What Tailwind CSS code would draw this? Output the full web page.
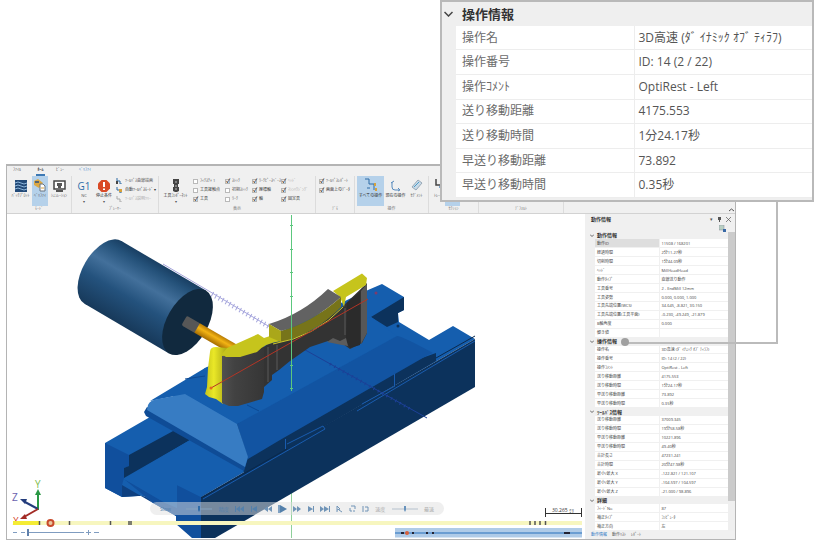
<!DOCTYPE html>
<html lang="ja">
<head>
    <meta charset="UTF-8">
    <meta name="viewport" content="width=device-width, initial-scale=1.0">
    <title>操作情報</title>
    <script src="https://cdn.jsdelivr.net/npm/@tailwindcss/browser@4"></script>
</head>
<body class="bg-white font-['Open_Sans','Noto_Sans_CJK_JP',sans-serif] text-[#555]">
    <div class="relative flex min-h-screen flex-col pt-[164px] pr-[78px] pb-2 pl-[6px]">

        <!-- Simulator window -->
        <main class="flex flex-1 flex-col border border-t-2 border-[#b4b4b4] bg-[#f0f0f0] text-[4px] leading-[6px]">

            <!-- Ribbon -->
            <header class="border-b border-[#d2d2d2]">
                <nav class="flex h-[10px] items-start gap-[11px] pl-[6px] text-[4px] leading-[8px]">
                    <a href="#" class="w-3">ﾌｧｲﾙ</a>
                    <a href="#" class="w-[9px] border-b-2 border-[#3c78b4] text-center font-bold text-[#333]">ﾎｰﾑ</a>
                    <a href="#" class="w-3">ﾋﾞｭｰ</a>
                    <a href="#" class="w-5 text-[#2f78c4]">ﾍﾞﾘﾌｧｲ</a>
                </nav>
                <div class="flex h-[37px] overflow-hidden whitespace-nowrap [&>section]:flex [&>section]:shrink-0 [&>section]:flex-col [&>section]:border-r [&>section]:border-[#dcdcdc] [&_button]:flex [&_button]:flex-col [&_button]:items-center [&_button]:overflow-hidden [&_h2]:text-center [&_h2]:text-[#777] [&_input]:size-[5px] [&_input]:shrink-0 [&_input]:appearance-none [&_input]:border [&_input]:border-[#b9b9b9] [&_input]:bg-white [&_input]:text-[6px] [&_input]:leading-[3px] [&_input]:font-bold [&_input]:text-[#444] [&_label]:flex [&_label]:items-center [&_label]:gap-[2px]">
                    <section class="w-[65px]">
                        <div class="flex h-[30px] pl-[2px]">
                            <button class="w-[23px] pt-1">
                                <svg class="h-3 w-3" viewBox="0 0 12 12"><path fill="#234a78" d="M0 0h12v12H0z"/><path fill="none" stroke="#8db6dc" d="M0 3q3-2 6 0t6 0M0 6q3-2 6 0t6 0M0 9q3-2 6 0t6 0"/></svg>
                                <span class="pt-[1px]">ﾊﾞｯｸﾌﾟﾛｯﾄ</span>
                            </button>
                            <button class="w-4 bg-[#b5d1ea] pt-[3px]">
                                <svg class="h-[13px] w-3" viewBox="0 0 12 13"><path fill="#dca843" d="M0 2l4-2 5 4-4 5-5-3z"/><path fill="#59656f" d="M1 2h4v2H1z"/><path fill="#fff" stroke="#697580" d="M6 5h3l2 2v5H6z"/><path stroke="#d9a23f" d="M7 9h3"/></svg>
                                <span class="pt-[1px]">ﾍﾞﾘﾌｧｲ</span>
                            </button>
                            <button class="w-[22px] pt-1">
                                <svg class="h-3 w-[13px]" viewBox="0 0 13 12"><path fill="#fff" stroke="#444" stroke-width="1.5" d="M1 1h11v8H1z"/><path fill="#555" d="M4 3h5v3H8v2H5V6H4zM3 10h7v2H3z"/></svg>
                                <span class="pt-[1px]">ｼﾐｭﾚｰｼｮﾝ</span>
                            </button>
                        </div>
                        <h2>ﾓｰﾄﾞ</h2>
                    </section>

                    <section class="w-[87px]">
                        <div class="flex h-[30px] pl-[2px]">
                            <button class="w-5 pt-1">
                                <span class="text-[10px] leading-3 text-[#2e6da8]">G1</span>
                                <span class="pt-[1px]">NC</span>
                                <span>▾</span>
                            </button>
                            <button class="w-5 pt-1">
                                <svg class="h-3 w-3" viewBox="0 0 12 12"><path fill="#d94a26" d="M3.5 0h5L12 3.500v5L8.500 12h-5L0 8.500v-5z"/><path stroke="#fff" stroke-width="2" d="M6 2v5M6 8.500v1.500"/></svg>
                                <span class="pt-[1px] text-[#333]">停止条件</span>
                                <span>▾</span>
                            </button>
                            <div class="flex flex-col gap-[3px] pt-[2px] pl-[2px]">
                                <a href="#" class="flex gap-[3px]"><svg class="size-[6px]" viewBox="0 0 6 6"><path fill="none" stroke="#2d6aa5" d="M1 0v3h3v3h2"/><path fill="#444" d="M0 3h2v3H0z"/></svg>ﾂｰﾙﾊﾟｽ曲線描画</a>
                                <a href="#" class="flex gap-[3px] text-[#333]"><svg class="size-[6px]" viewBox="0 0 6 6"><path fill="none" stroke="#2d6aa5" d="M1 0v3h3v3h2"/><path fill="#d8a13a" d="M3 2h3v3H3z"/></svg>自動ﾂｰﾙﾊﾟｽﾓｰﾄﾞ ▾</a>
                                <a href="#" class="flex gap-[3px] text-[#aaa]"><svg class="size-[6px]" viewBox="0 0 6 6"><path fill="none" stroke="#aaa" d="M1 0v3h3v3h2"/></svg>ﾂｰﾙﾊﾟｽ説明ﾂﾘｰ</a>
                            </div>
                        </div>
                        <h2>ﾌﾟﾚｰﾔｰ</h2>
                    </section>

                    <section class="w-[157px]">
                        <div class="flex h-[30px] pl-[2px]">
                            <button class="w-[29px] pt-[3px]">
                                <svg class="h-[13px] w-[6px]" viewBox="0 0 6 13"><path fill="#444" d="M0 0h6v5H5v3h1v4l-2 1H2l-2-1V8h1V5H0z"/><path stroke="#bbb" d="M2 3h2M2 7h2M2 10h2"/></svg>
                                <span class="pt-[1px] text-[#333]">工具ｺﾝﾎﾟｰﾈﾝﾄ</span>
                                <span>▾</span>
                            </button>
                            <div class="grid grid-cols-[32px_27px_29px_30px] content-start gap-y-[3px] pt-[2px] pl-[3px]">
                                <label><input type="checkbox">ﾌｨｸｽﾁｬ 1</label>
                                <label><input type="checkbox" checked class="checked:before:content-['✓']">ｽﾄｯｸ</label>
                                <label><input type="checkbox" checked class="checked:before:content-['✓']">ﾜｰｸﾋﾟｰｽﾍﾞｰｽ</label>
                                <label class="text-[#aaa]"><input type="checkbox" checked class="checked:before:content-['✓']">ﾍｯﾄﾞ</label>
                                <label class="text-[#333]"><input type="checkbox">工具接触点</label>
                                <label><input type="checkbox">初期ｽﾄｯｸ</label>
                                <label class="text-[#333]"><input type="checkbox" checked class="checked:before:content-['✓']">座標軸</label>
                                <label class="text-[#aaa]"><input type="checkbox" checked class="checked:before:content-['✓']">ﾏｼﾝﾊｳｼﾞﾝｸﾞ</label>
                                <label class="text-[#333]"><input type="checkbox" checked class="checked:before:content-['✓']">工具</label>
                                <label><input type="checkbox">ﾜｰｸ</label>
                                <label class="text-[#333]"><input type="checkbox" checked class="checked:before:content-['✓']">軸</label>
                                <label class="text-[#333]"><input type="checkbox" checked class="checked:before:content-['✓']">固定具</label>
                            </div>
                        </div>
                        <h2>表示</h2>
                    </section>

                    <section class="w-[39px]">
                        <div class="flex h-[30px] flex-col gap-[3px] pt-[2px] pl-[3px]">
                            <label><input type="checkbox" checked class="checked:before:content-['✓']">ﾂｰﾙﾊﾟｽﾚﾎﾟｰﾄ</label>
                            <label class="text-[#333]"><input type="checkbox" checked class="checked:before:content-['✓']">画面上のﾃﾞｰﾀ</label>
                        </div>
                        <h2>ﾃﾞﾓ</h2>
                    </section>

                    <section class="w-[74px]">
                        <div class="flex h-[30px] pl-[2px]">
                            <button class="w-[27px] bg-[#b5d1ea] pt-[2px]">
                                <svg class="h-[14px] w-[14px]" viewBox="0 0 14 14"><path fill="none" stroke="#2d6aa5" d="M1 1h4v5h5v6M3 10h3"/><path fill="#d5a23e" d="M10 5h2v3h-2zM11 10h2v3h-2z"/></svg>
                                <span class="pt-[1px] text-[#333]">すべての操作</span>
                            </button>
                            <button class="w-[23px] pt-[2px]">
                                <svg class="h-[14px] w-[12px]" viewBox="0 0 12 14"><path fill="none" stroke="#5589bd" d="M2 4v5q0 3 3 3h4M4 3L1 5M8 10l2 2-2 1"/></svg>
                                <span class="pt-[1px] text-[#333]">現在の操作</span>
                            </button>
                            <button class="w-[19px] pt-[2px]">
                                <svg class="h-[14px] w-[12px]" viewBox="0 0 12 14"><path fill="#c8dae8" stroke="#98a8b6" d="M1 9l6-7 4 3-6 7z"/><path fill="none" stroke="#4b9ac5" d="M3 9l5-5"/></svg>
                                <span class="pt-[1px]">ｾｸﾞﾒﾝﾄ</span>
                            </button>
                        </div>
                        <h2>操作</h2>
                    </section>

                    <section class="w-[50px]">
                        <div class="flex h-[30px] pl-[2px]">
                            <button class="w-[14px] pt-[2px]">
                                <svg class="h-[14px] w-[12px]" viewBox="0 0 12 14"><path fill="none" stroke="#444" stroke-width="1.500" d="M4 1v6h4"/><path fill="none" stroke="#5589bd" stroke-width="1.500" d="M7 9h3v4"/></svg>
                                <span class="pt-[1px]">ﾄﾚｰｽ</span>
                            </button>
                            <button class="w-[15px] bg-[#b5d1ea]" aria-label="ｾｸｼｮﾝ"></button>
                        </div>
                        <h2>ｾｸｼｮﾝ</h2>
                    </section>

                    <section class="w-[85px]">
                        <div class="h-[30px]"></div>
                        <h2>ﾃﾞﾌｫﾙﾄ</h2>
                    </section>

                    <div class="flex flex-1 items-end justify-end pr-[1px] pb-[1px]">
                        <button aria-label="ﾘﾎﾞﾝを閉じる"><svg class="h-[4px] w-[5px]" viewBox="0 0 5 4"><path fill="none" stroke="#555" d="M0 3l2.500-2 2.500 2"/></svg></button>
                    </div>
                </div>
            </header>

            <div class="flex flex-1">
                <!-- 3D view -->
                <div class="relative flex-1 overflow-hidden bg-white">
                    <svg class="absolute inset-0 h-full w-full" viewBox="7 214 578 325" preserveAspectRatio="xMinYMin meet">
                        <defs>
                            <linearGradient id="holder" x1="0" y1="0" x2="0" y2="1">
                                <stop offset="0" stop-color="#193f63"/>
                                <stop offset=".12" stop-color="#245179"/>
                                <stop offset=".36" stop-color="#43709b"/>
                                <stop offset=".62" stop-color="#24527d"/>
                                <stop offset="1" stop-color="#17395a"/>
                            </linearGradient>
                            <linearGradient id="shank" x1="0" y1="0" x2="0" y2="1">
                                <stop offset="0" stop-color="#b87c05"/>
                                <stop offset=".4" stop-color="#f3b414"/>
                                <stop offset="1" stop-color="#a56c02"/>
                            </linearGradient>
                            <linearGradient id="leg" x1="0" y1="0" x2="1" y2="0">
                                <stop offset="0" stop-color="#c5c41c"/>
                                <stop offset=".4" stop-color="#eae827"/>
                                <stop offset="1" stop-color="#aaa816"/>
                            </linearGradient>
                            <linearGradient id="front" x1="0" y1="0" x2="1" y2="0">
                                <stop offset="0" stop-color="#505050"/>
                                <stop offset=".3" stop-color="#424242"/>
                                <stop offset="1" stop-color="#363636"/>
                            </linearGradient>
                        </defs>

                        <!-- rear axis -->
                        <path stroke="#a5a5dc" d="M163 264L275 330"/>
                        <path stroke="#a5a5dc" stroke-width="5" stroke-dasharray="1 3" d="M212 294L275 330"/>
                        <path stroke="#8fd09a" d="M291.500 215V538"/>

                        <!-- vise base -->
                        <path fill="#155eae" d="M105 443L150 417 205 368 368 290 382 284 404 297V310L398 313 399 322 429 340 453 326 475 339 201 497 176 516 153 503Q146 494 138 496L122 497 105 488z"/>
                        <path fill="#104f9d" d="M105 443L129 455V466L124 468V478L122 485V497L105 488z"/>
                        <path fill="#0c325c" d="M129 455L175 430 190 440 124 478V468L129 466z"/>
                        <path fill="#0e4080" d="M122 485L153 503Q146 494 138 496L122 497z"/>
                        <path fill="#104f9d" d="M177 485L201 497V538H192L176 524V516L153 503 124 479 177 508z"/>
                        <path fill="#155eae" d="M124 479L190 440 244 470 201 497 177 485V508L165 503z"/>
                        <path fill="#0c325c" d="M201 497L475 339V387L215 538H201z"/>
                        <path fill="#0c325c" d="M371 317L404 297V310L398 313V322L387 327z"/>
                        <circle cx="398" cy="326" r="1.500" fill="#0c325c"/>

                        <!-- jaw plate -->
                        <path fill="#0c325c" d="M237 424L436 353V361L244 474z"/>
                        <path fill="#155eae" d="M150 401L205 368 371 317 397 336 237 424 185 394z"/>
                        <path fill="#1254a2" d="M237 424L397 336Q402 336 433 353L428 355 280 440 248 459z"/>
                        <path fill="#0f4c96" d="M147 407L144 412 146 416 244 471 248 458z"/>
                        <path fill="#377cc3" d="M148 405Q150 400 158 399L185 394 237 424 248 457 245 467 147 410z"/>
                        <path fill="none" stroke="#0a294c" d="M201 498L287 449M436 358L475 336"/>
                        <path fill="none" stroke="#195caf" d="M203 499L325 429 323 426 287 444M285.500 439V449M357 411L475 341M362 404L395 386M394.500 374V386"/>
                        <path fill="none" stroke="#0d4992" d="M185 379L205 376M247 405L259 411"/>
                        <path stroke="#1c4097" d="M291 342L427 418"/>
                        <path stroke="#1c4097" stroke-width="3" stroke-dasharray="1 4" d="M330 364L412 410"/>

                        <!-- tool holder and end mill -->
                        <g transform="translate(187.500 322) rotate(30.400)">
                            <ellipse cx="-98" rx="20.300" ry="36.400" fill="url(#holder)"/>
                            <path fill="url(#holder)" d="M-98-36.400H0V36.400H-98z"/>
                            <ellipse rx="20.300" ry="36.400" fill="#11293e"/>
                        </g>
                        <g transform="translate(185 321) rotate(30)">
                            <rect x="-1" y="-5.500" width="16" height="11" rx="2" fill="#575757"/>
                            <path fill="url(#shank)" d="M14-5.500H66V5.500H14z"/>
                        </g>

                        <!-- workpiece -->
                        <path fill="url(#leg)" d="M227 348L216 347Q210 347 210 352L208 368 207 387 205 394 209 397 216 399 223 404z"/>
                        <path fill="#333" d="M240 357L257 352 268 344 281 341 315 329 342 307 367 283V333L362 343 350 349 343 344 328 341 310 347 290 361 279 370 272 375V380L264 387z"/>
                        <path fill="url(#front)" d="M222 356L240 357 264 346V392L262 399 238 406H229L222 403z"/>
                        <path fill="#2b2b2b" d="M347 303L360 292V345L350 348 346 341z"/>
                        <path fill="#575757" d="M361 291L367 284V333L361 344z"/>
                        <path fill="none" stroke="#464646" stroke-width="2" d="M268 347V382M277 345V370M345 308V335"/>
                        <path fill="#5c5c5c" d="M327 342L333 338 340 341 346 338 348 346 342 345z"/>
                        <path fill="#c6c41c" d="M222 354L227 348 258 334 264 338 270 336 281 341Q265 343 257 352L240 357H226z"/>
                        <path fill="#c6c41c" d="M333 291L362 273.500 367 278 366 285 346 297 344 307 340 297z"/>
                        <path fill="#626262" d="M269 324Q302 314 328 289L341 297Q313 322 281 331z"/>
                        <path fill="#aaa71a" d="M269 324L281 331V342L269 337z"/>
                        <path fill="#77741a" d="M281 331Q313 322 341 297V307Q315 334 281 342z"/>
                        <path fill="none" stroke="#cfcb2c" d="M273 344Q315 337 343 307"/>
                        <path stroke="#b33526" d="M211 388L368 299"/>
                        <circle cx="211" cy="388" r="1.500" fill="#e2681d"/>
                        <circle cx="376" cy="293" r="1.500" fill="#7d3b6c"/>
                        <path stroke="#5cc77e" d="M291.500 215V391"/>
                        <path stroke="#5cc77e" d="M290 225.500H293M290 249.500H293M290 272.500H293M290 296.500H293M290 365.500H293M290 388.500H293"/>

                        <!-- axis triad -->
                        <path stroke="#2a9844" stroke-width="2" d="M38 510V492"/>
                        <path fill="#2a9844" d="M35 495L38 489 41 495z"/>
                        <path stroke="#243d7c" stroke-width="2" d="M38 509L25 502"/>
                        <path fill="#243d7c" d="M20 499L27 499 25 504z"/>
                        <path stroke="#a32b25" stroke-width="2" d="M38 509L24 517"/>
                        <path fill="#a32b25" d="M20 519L25 514 27 519z"/>
                        <g font-size="10">
                            <text x="35" y="488" fill="#7ebc4b">Y</text>
                            <text x="12" y="501" fill="#6a61ae">Z</text>
                            <text x="13" y="525" fill="#d5431f">X</text>
                        </g>

                        <!-- scale bar -->
                        <path fill="none" stroke="#333" d="M545.500 508V517M581.500 508V517M545.500 513.500H581.500"/>
                        <text x="552" y="512" font-size="5" fill="#333">30.265 ﾐﾘ</text>
                    </svg>

                    <!-- player -->
                    <div class="absolute bottom-6 left-[143px] flex h-[13px] w-[294px] items-center justify-between rounded-full bg-[#e0e0e0]/50 px-[10px] text-[5px] text-[#5480ab]">
                        <span class="w-5">Slow</span>
                        <svg class="h-2 w-[26px]" viewBox="0 0 26 8"><path stroke="#86a2bd" d="M0 4h26"/><path fill="#2e6ba8" d="M12 1h2v4l-1 2-1-2z"/></svg>
                        <span>精度</span>
                        <button aria-label="最初"><svg class="h-2 w-[10px]" viewBox="0 0 10 8"><path fill="#5480ab" d="M0 1h1v6H0zM5 1v6L1 4zM9 1v6L5 4z"/></svg></button>
                        <button aria-label="前へ"><svg class="h-2 w-[6px]" viewBox="0 0 6 8"><path fill="#5480ab" d="M0 1h1v6H0zM6 1v6L1 4z"/></svg></button>
                        <button aria-label="戻る"><svg class="h-2 w-[8px]" viewBox="0 0 8 8"><path fill="#7094b7" d="M4 1v6L0 4zM8 1v6L4 4z"/></svg></button>
                        <button aria-label="再生"><svg class="h-2 w-[9px]" viewBox="0 0 9 8"><path fill="#7fa1c2" d="M0 0h2v8H0z"/><path fill="#5480ab" d="M2 0l7 4-7 4z"/></svg></button>
                        <button aria-label="早送り"><svg class="h-2 w-[8px]" viewBox="0 0 8 8"><path fill="#7094b7" d="M0 1v6l4-3zM4 1v6l4-3z"/></svg></button>
                        <button aria-label="次へ"><svg class="h-2 w-[6px]" viewBox="0 0 6 8"><path fill="#7094b7" d="M5 1h1v6H5zM0 1v6l5-3z"/></svg></button>
                        <button aria-label="最後"><svg class="h-2 w-[10px]" viewBox="0 0 10 8"><path fill="#7094b7" d="M9 1h1v6H9zM0 1v6l4-3zM4 1v6l5-3z"/></svg></button>
                        <button aria-label="選択"><svg class="h-2 w-[6px]" viewBox="0 0 6 8"><path fill="none" stroke="#7094b7" d="M1 1v6M1 1l3 3-3 1M3 5l3 2"/></svg></button>
                        <button aria-label="ループ"><svg class="h-2 w-[7px]" viewBox="0 0 7 8"><path fill="none" stroke="#7094b7" d="M1 3v3h2M2 1h4v3M4 6h2"/></svg></button>
                        <button aria-label="区間"><svg class="h-2 w-[7px]" viewBox="0 0 7 8"><path fill="none" stroke="#7094b7" d="M1 1v6M3 2h3v4H3"/></svg></button>
                        <span class="text-[#aaa]">速度</span>
                        <svg class="h-2 w-[26px]" viewBox="0 0 26 8"><path stroke="#b5c1cd" d="M0 4h26"/><path fill="#6893bd" d="M12 1h2v4l-1 2-1-2z"/></svg>
                        <span class="text-[#aaa]">最速</span>
                    </div>

                    <!-- timeline -->
                    <svg class="absolute bottom-0 left-[6px] h-[20px] w-[570px]" viewBox="13 519 570 20">
                        <path fill="#f7f6bf" d="M13 521H582V525H13z"/>
                        <path fill="#f4ec35" d="M13 521H39V525H13z"/>
                        <path stroke="#555" stroke-width="1.500" d="M39.500 521V525M69.500 521V525M110.500 521V525M129 521V525M131 521V525M530 521V525M535 521V525M540 521V525M545.500 521V525"/>
                        <circle cx="50.500" cy="523" r="3" fill="#e9c7a0" stroke="#c84a2a" stroke-width="2"/>
                        <path fill="none" stroke="#7f9cc0" d="M13 532.500h4M21 532.500h4M28 532.500H84M86 532.500h5M88.500 530v5M94 532.500h5"/>
                        <path fill="#5f80ab" d="M27 529h2v7h-2z"/>
                        <path fill="#afcbe8" d="M395 528H582V537.500H395z"/>
                        <path stroke="#6a9dd2" stroke-width="2" d="M395 533H582"/>
                        <path stroke="#223" stroke-width="2" d="M401 533h3M412 533h2M426 533h2M432 533h2M564 533h6"/>
                        <circle cx="407" cy="533" r="2" fill="#d9603b"/>
                    </svg>
                </div>

                <!-- Move info panel -->
                <aside class="flex w-[150px] flex-col pl-1">
                    <div class="flex h-[10px] items-center gap-1 pr-1 pl-[2px]">
                        <h2 class="flex-1 text-[5px] font-bold text-[#333]">動作情報</h2>
                        <button aria-label="ﾒﾆｭｰ" class="text-[5px]">▾</button>
                        <button aria-label="固定"><svg class="size-[5px]" viewBox="0 0 5 5"><path fill="#555" d="M1 0h3v3H1zM2 3h1v2H2z"/></svg></button>
                        <button aria-label="閉じる"><svg class="size-[5px]" viewBox="0 0 5 5"><path stroke="#555" stroke-width=".7" d="M0 0l5 5M5 0L0 5"/></svg></button>
                    </div>
                    <div class="flex h-2 justify-end pr-[9px]">
                        <button aria-label="設定"><svg class="h-[7px] w-[7px]" viewBox="0 0 7 7"><path fill="#b8cfc3" stroke="#889" stroke-width=".5" d="M0 0h5v5H0z"/><path fill="#3868a5" d="M4 4h3v3H4z"/></svg></button>
                    </div>
                    <div class="flex flex-1 pl-[1px]">
                        <table class="w-full flex-1 table-fixed border-collapse whitespace-nowrap text-[#444] [&_td]:overflow-hidden [&_td]:border-b [&_td]:border-[#f0f0f0] [&_td]:bg-white [&_td]:p-0 [&_td]:pl-[2px] [&_td]:leading-[5px] [&_th]:overflow-hidden [&_th]:p-0 [&_th]:pl-[2px] [&_th]:text-left [&_th]:leading-[5px] [&_th[scope=row]]:border-r [&_th[scope=row]]:border-b [&_th[scope=row]]:border-[#f0f0f0] [&_th[scope=row]]:bg-white [&_th[scope=row]]:font-normal [&_th[scope=rowgroup]]:text-[5px] [&_th[scope=rowgroup]]:text-[#333]">
                            <colgroup><col class="w-[5px]"><col class="w-[64px]"><col></colgroup>
                            <tbody>
                                <tr><td class="!bg-[#f0f0f0] !pl-0"><svg class="h-[3px] w-1" viewBox="0 0 4 3"><path fill="none" stroke="#444" stroke-width=".8" d="M0 .5l2 2 2-2"/></svg></td><th scope="rowgroup" colspan="2">動作情報</th></tr>
                                <tr><td class="!bg-[#f0f0f0]"></td><th scope="row" class="!bg-[#dedede]">動作ID</th><td>11508 / 168201</td></tr>
                                <tr><td class="!bg-[#f0f0f0]"></td><th scope="row">経過時間</th><td>2分11.27秒</td></tr>
                                <tr><td class="!bg-[#f0f0f0]"></td><th scope="row">切削時間</th><td>1分44.09秒</td></tr>
                                <tr><td class="!bg-[#f0f0f0]"></td><th scope="row">ﾍｯﾄﾞ</th><td>MillHeadHead</td></tr>
                                <tr><td class="!bg-[#f0f0f0]"></td><th scope="row">動作ﾀｲﾌﾟ</th><td>直線送り動作</td></tr>
                                <tr><td class="!bg-[#f0f0f0]"></td><th scope="row">工具番号</th><td>2 - EndMill 12mm</td></tr>
                                <tr><td class="!bg-[#f0f0f0]"></td><th scope="row">工具姿勢</th><td>0.000, 0.000, 1.000</td></tr>
                                <tr><td class="!bg-[#f0f0f0]"></td><th scope="row">工具先端位置(WCS)</th><td>34.645, -8.821, 30.150</td></tr>
                                <tr><td class="!bg-[#f0f0f0]"></td><th scope="row">工具先端位置(工具平面)</th><td>-0.230, -49.249, -21.879</td></tr>
                                <tr><td class="!bg-[#f0f0f0]"></td><th scope="row">B軸角度</th><td>0.000</td></tr>
                                <tr><td class="!bg-[#f0f0f0]"></td><th scope="row">傾き値</th><td></td></tr>
                            </tbody>
                            <tbody>
                                <tr><td class="!bg-[#f0f0f0] !pl-0"><svg class="h-[3px] w-1" viewBox="0 0 4 3"><path fill="none" stroke="#444" stroke-width=".8" d="M0 .5l2 2 2-2"/></svg></td><th scope="rowgroup" colspan="2">操作情報</th></tr>
                                <tr><td class="!bg-[#f0f0f0]"></td><th scope="row">操作名</th><td>3D高速 (ﾀﾞ ｲﾅﾐｯｸ ｵﾌﾞ ﾃｨﾗﾌ)</td></tr>
                                <tr><td class="!bg-[#f0f0f0]"></td><th scope="row">操作番号</th><td>ID: 14 (2 / 22)</td></tr>
                                <tr><td class="!bg-[#f0f0f0]"></td><th scope="row">操作ｺﾒﾝﾄ</th><td>OptiRest - Left</td></tr>
                                <tr><td class="!bg-[#f0f0f0]"></td><th scope="row">送り移動距離</th><td>4175.553</td></tr>
                                <tr><td class="!bg-[#f0f0f0]"></td><th scope="row">送り移動時間</th><td>1分24.17秒</td></tr>
                                <tr><td class="!bg-[#f0f0f0]"></td><th scope="row">早送り移動距離</th><td>73.892</td></tr>
                                <tr><td class="!bg-[#f0f0f0]"></td><th scope="row">早送り移動時間</th><td>0.35秒</td></tr>
                            </tbody>
                            <tbody>
                                <tr><td class="!bg-[#f0f0f0] !pl-0"><svg class="h-[3px] w-1" viewBox="0 0 4 3"><path fill="none" stroke="#444" stroke-width=".8" d="M0 .5l2 2 2-2"/></svg></td><th scope="rowgroup" colspan="2">ﾂｰﾙﾊﾟｽ情報</th></tr>
                                <tr><td class="!bg-[#f0f0f0]"></td><th scope="row">送り移動距離</th><td>37009.345</td></tr>
                                <tr><td class="!bg-[#f0f0f0]"></td><th scope="row">送り移動時間</th><td>19分58.58秒</td></tr>
                                <tr><td class="!bg-[#f0f0f0]"></td><th scope="row">早送り移動距離</th><td>10221.896</td></tr>
                                <tr><td class="!bg-[#f0f0f0]"></td><th scope="row">早送り移動時間</th><td>49.40秒</td></tr>
                                <tr><td class="!bg-[#f0f0f0]"></td><th scope="row">合計長さ</th><td>47231.241</td></tr>
                                <tr><td class="!bg-[#f0f0f0]"></td><th scope="row">合計時間</th><td>20分47.98秒</td></tr>
                                <tr><td class="!bg-[#f0f0f0]"></td><th scope="row">最小/最大 X</th><td>-122.821 / 121.107</td></tr>
                                <tr><td class="!bg-[#f0f0f0]"></td><th scope="row">最小/最大 Y</th><td>-104.597 / 104.597</td></tr>
                                <tr><td class="!bg-[#f0f0f0]"></td><th scope="row">最小/最大 Z</th><td>-21.000 / 98.896</td></tr>
                            </tbody>
                            <tbody>
                                <tr><td class="!bg-[#f0f0f0] !pl-0"><svg class="h-[3px] w-1" viewBox="0 0 4 3"><path fill="none" stroke="#444" stroke-width=".8" d="M0 .5l2 2 2-2"/></svg></td><th scope="rowgroup" colspan="2">詳細</th></tr>
                                <tr><td class="!bg-[#f0f0f0]"></td><th scope="row">ﾌｨｰﾄﾞNo</th><td>87</td></tr>
                                <tr><td class="!bg-[#f0f0f0]"></td><th scope="row">補正ﾀｲﾌﾟ</th><td>ｺﾝﾋﾟｭｰﾀ</td></tr>
                                <tr><td class="!bg-[#f0f0f0]"></td><th scope="row">補正方向</th><td>左</td></tr>
                            </tbody>
                        </table>
                        <div class="w-[7px] bg-[#efefef] pb-[30px]"><div class="h-full bg-[#cbcbcb]"></div></div>
                    </div>
                    <nav class="flex h-2 gap-[5px] pl-[2px] leading-[8px]">
                        <a href="#" class="text-[#2f78c4]">動作情報</a>
                        <a href="#">動作ﾘｽﾄ</a>
                        <a href="#">ﾚﾎﾟｰﾄ</a>
                    </nav>
                </aside>
            </div>
        </main>

        <!-- Leader line from the callout to its section -->
        <div class="absolute top-[202px] right-[36px] h-[142px] w-[152px] border-r-2 border-b-2 border-[#bbb]"></div>
        <div class="absolute top-[338px] right-[185px] size-2 rounded-full bg-[#a0a0a0]"></div>

        <!-- Enlarged callout -->
        <section class="absolute top-0 right-0 w-[374px] border-2 border-[#b9b9b9] bg-[#efefef] pb-[2px] pl-[14px]">
            <h2 class="relative flex h-6 items-center pl-[6px] text-[13px] leading-5 font-bold text-[#333]">
                <svg class="absolute -left-3 h-[6px] w-[9px]" viewBox="0 0 9 6"><path fill="none" stroke="#444" stroke-width="1.500" d="M.5 1l4 4 4-4"/></svg>
                操作情報
            </h2>
            <table class="h-[172px] w-full table-fixed border-collapse bg-white text-[12px] leading-4 whitespace-nowrap text-[#555] [&_td]:border-b [&_td]:border-[#ededed] [&_td]:py-0 [&_td]:pl-1 [&_th]:w-[178px] [&_th]:border-r [&_th]:border-b [&_th]:border-[#ededed] [&_th]:py-0 [&_th]:pl-[6px] [&_th]:text-left [&_th]:font-normal [&_th]:text-[#6b6b6b]">
                <tr><th scope="row">操作名</th><td>3D高速 (ﾀﾞ ｲﾅﾐｯｸ ｵﾌﾞ ﾃｨﾗﾌ)</td></tr>
                <tr><th scope="row">操作番号</th><td>ID: 14 (2 / 22)</td></tr>
                <tr><th scope="row">操作ｺﾒﾝﾄ</th><td>OptiRest - Left</td></tr>
                <tr><th scope="row">送り移動距離</th><td>4175.553</td></tr>
                <tr><th scope="row">送り移動時間</th><td>1分24.17秒</td></tr>
                <tr><th scope="row">早送り移動距離</th><td>73.892</td></tr>
                <tr><th scope="row">早送り移動時間</th><td>0.35秒</td></tr>
            </table>
        </section>
    </div>
</body>
</html>
